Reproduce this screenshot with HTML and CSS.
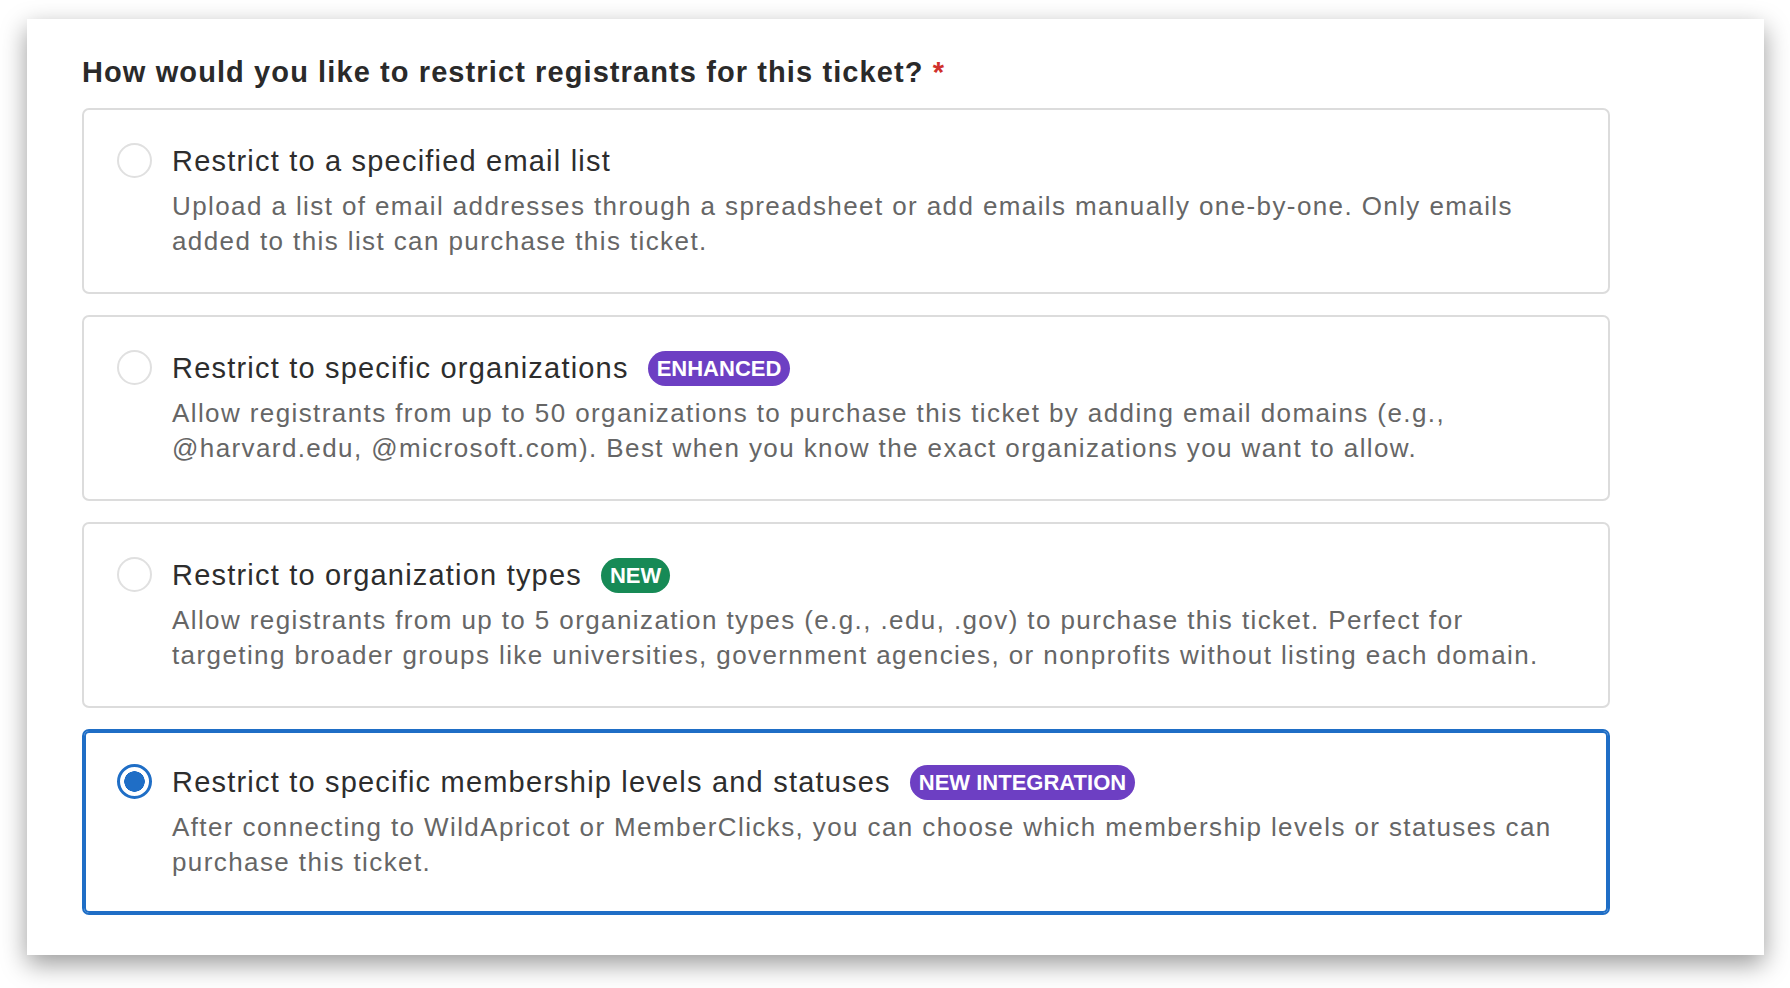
FILE: index.html
```html
<!DOCTYPE html>
<html lang="en">
<head>
  <meta charset="UTF-8">
  <meta name="viewport" content="width=device-width, initial-scale=1.0">
  <title>Ticket Restrictions</title>
  <link rel="stylesheet" href="styles.css">
</head>
<body>
  <div class="panel">
    <h2 class="question">How would you like to restrict registrants for this ticket? <span class="required">*</span></h2>

    <div class="options">
      <!-- Email list -->
      <label class="option">
        <input type="radio" name="restriction" value="email">
        <div class="option-body">
          <div class="option-title">Restrict to a specified email list</div>
          <p class="option-desc">Upload a list of email addresses through a spreadsheet or add emails manually one-by-one. Only emails added to this list can purchase this ticket.</p>
        </div>
      </label>

      <!-- Organizations -->
      <label class="option">
        <input type="radio" name="restriction" value="orgs">
        <div class="option-body">
          <div class="option-title">Restrict to specific organizations <span class="badge badge-purple">ENHANCED</span></div>
          <p class="option-desc">Allow registrants from up to 50 organizations to purchase this ticket by adding email domains (e.g., @harvard.edu, @microsoft.com). Best when you know the exact organizations you want to allow.</p>
        </div>
      </label>

      <!-- Organization types -->
      <label class="option">
        <input type="radio" name="restriction" value="types">
        <div class="option-body">
          <div class="option-title">Restrict to organization types <span class="badge badge-green">NEW</span></div>
          <p class="option-desc">Allow registrants from up to 5 organization types (e.g., .edu, .gov) to purchase this ticket. Perfect for targeting broader groups like universities, government agencies, or nonprofits without listing each domain.</p>
        </div>
      </label>

      <!-- Membership -->
      <label class="option selected">
        <input type="radio" name="restriction" value="membership" checked>
        <div class="option-body">
          <div class="option-title">Restrict to specific membership levels and statuses <span class="badge badge-purple">NEW INTEGRATION</span></div>
          <p class="option-desc">After connecting to WildApricot or MemberClicks, you can choose which membership levels or statuses can purchase this ticket.</p>
        </div>
      </label>
    </div>
  </div>

  <script>
    // keep the selected card highlighted
    document.querySelectorAll(".option input").forEach((radio) => {
      radio.addEventListener("change", () => {
        document.querySelectorAll(".option").forEach((el) => el.classList.remove("selected"));
        radio.closest(".option").classList.add("selected");
      });
    });
  </script>
</body>
</html>
```

FILE: styles.css
```css
body {
  font-family: "Liberation Sans", Arial, sans-serif;
  margin: 0;
  padding: 19px 0 35px 27px;
  background-color: #fff;
  color: #2b2b2b;
}
.panel {
  width: 1737px;
  padding: 35px 0 40px 55px;
  box-sizing: border-box;
  background: #fff;
  box-shadow: 0 9px 24px rgba(0, 0, 0, 0.4);
}
.question {
  margin: 0 0 18px;
  font-size: 29px;
  line-height: 36px;
  font-weight: bold;
  letter-spacing: 1.1px;
  color: #2a2a2a;
}
.required {
  color: #d0302c;
}
.options {
  width: 1528px;
  display: flex;
  flex-direction: column;
  gap: 21px;
}
.option {
  display: flex;
  align-items: flex-start;
  gap: 20px;
  padding: 33px 30px 33px 33px;
  border: 2px solid #dcdcdc;
  border-radius: 7px;
  cursor: pointer;
}
.option.selected {
  border-color: #1f6ec6;
  box-shadow: inset 0 0 0 2px #1f6ec6;
}
.option input {
  appearance: none;
  -webkit-appearance: none;
  flex: none;
  width: 35px;
  height: 35px;
  margin: 0;
  border: 2px solid #e0e0e0;
  border-radius: 50%;
  background: #fff;
}
.option input:checked {
  border: 3px solid #1f6ec6;
  background: radial-gradient(circle, #1f6ec6 0 10px, #fff 10.5px);
}
.option-body {
  flex: 1;
}
.option-title {
  display: flex;
  align-items: center;
  gap: 19px;
  font-size: 29px;
  line-height: 36px;
  letter-spacing: 1.2px;
  color: #2d2d2d;
}
.badge {
  display: inline-block;
  height: 35px;
  line-height: 35px;
  padding: 0 9px;
  border-radius: 18px;
  font-size: 22px;
  font-weight: bold;
  letter-spacing: 0;
  color: #fff;
}
.badge-purple {
  background: #6d3fc3;
}
.badge-green {
  background: #178a56;
}
.option-desc {
  margin: 10px 0 0;
  font-size: 26px;
  line-height: 35px;
  letter-spacing: 1.4px;
  color: #666;
}
```
